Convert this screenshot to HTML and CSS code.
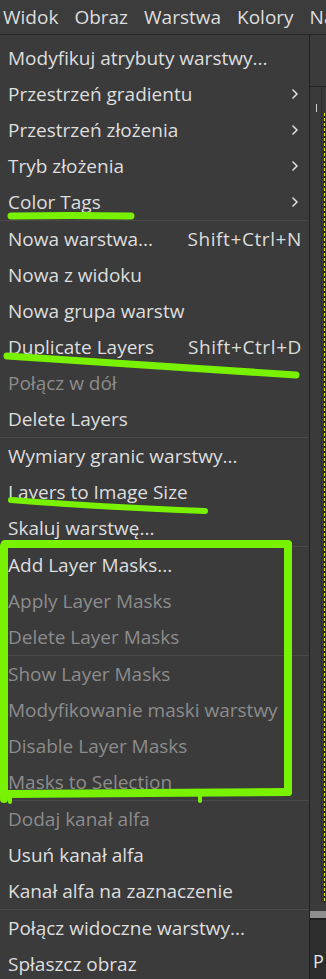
FILE: index.html
```html
<!DOCTYPE html>
<html lang="pl">
<head>
<meta charset="utf-8">
<title>Warstwa</title>
<link rel="stylesheet" href="styles.css">
</head>
<body>
<div class="app">
  <div class="menubar">
    <span class="mb">Widok</span>
    <span class="mb">Obraz</span>
    <span class="mb">Warstwa</span>
    <span class="mb">Kolory</span>
    <span class="mb">Na</span>
  </div>
  <div class="main">
    <div class="menu">
      <div class="item"><span>Modyfikuj atrybuty warstwy...</span></div>
      <div class="item"><span>Przestrzeń gradientu</span><svg class="chev" width="6" height="10" viewBox="0 0 6 10"><polyline points="1,1 5,5 1,9"/></svg></div>
      <div class="item"><span>Przestrzeń złożenia</span><svg class="chev" width="6" height="10" viewBox="0 0 6 10"><polyline points="1,1 5,5 1,9"/></svg></div>
      <div class="item"><span>Tryb złożenia</span><svg class="chev" width="6" height="10" viewBox="0 0 6 10"><polyline points="1,1 5,5 1,9"/></svg></div>
      <div class="item"><span>Color Tags</span><svg class="chev" width="6" height="10" viewBox="0 0 6 10"><polyline points="1,1 5,5 1,9"/></svg></div>
      <div class="sep"></div>
      <div class="item"><span>Nowa warstwa...</span><span class="key">Shift+Ctrl+N</span></div>
      <div class="item"><span>Nowa z widoku</span></div>
      <div class="item"><span>Nowa grupa warstw</span></div>
      <div class="item"><span>Duplicate Layers</span><span class="key">Shift+Ctrl+D</span></div>
      <div class="item dis"><span>Połącz w dół</span></div>
      <div class="item"><span>Delete Layers</span></div>
      <div class="sep"></div>
      <div class="item"><span>Wymiary granic warstwy...</span></div>
      <div class="item"><span>Layers to Image Size</span></div>
      <div class="item"><span>Skaluj warstwę...</span></div>
      <div class="sep"></div>
      <div class="item"><span>Add Layer Masks...</span></div>
      <div class="item dis"><span>Apply Layer Masks</span></div>
      <div class="item dis"><span>Delete Layer Masks</span></div>
      <div class="sep"></div>
      <div class="item dis"><span>Show Layer Masks</span></div>
      <div class="item dis"><span>Modyfikowanie maski warstwy</span></div>
      <div class="item dis"><span>Disable Layer Masks</span></div>
      <div class="item dis"><span>Masks to Selection</span></div>
      <div class="sep"></div>
      <div class="item dis"><span>Dodaj kanał alfa</span></div>
      <div class="item"><span>Usuń kanał alfa</span></div>
      <div class="item"><span>Kanał alfa na zaznaczenie</span></div>
      <div class="sep"></div>
      <div class="item"><span>Połącz widoczne warstwy...</span></div>
      <div class="item"><span>Spłaszcz obraz</span></div>
    </div>
    <div class="side">
      <div class="ruler-top"></div>
      <div class="canvas-area">
        <div class="vruler"><div class="tick"></div></div>
        <div class="canvas"><div class="dash"></div></div>
      </div>
      <div class="gap"></div>
      <div class="hbar"></div>
      <div class="hline"></div>
      <div class="bottom"><span class="p">P</span></div>
    </div>
  </div>
  <svg class="marks" width="326" height="979" viewBox="0 0 326 979">
    <path d="M11 216 Q70 215 131 216"/>
    <path d="M7 356 L296 375"/>
    <path d="M11 500 Q100 507 205 511"/>
    <path d="M4 546 L4 799"/>
    <path d="M5 544 L288 544"/>
    <path d="M288 545 L288 792"/>
    <path d="M6 794 L288 792"/>
    <path class="thin" d="M10 796 L10 802"/>
    <path class="thin" d="M200 796 L200 801"/>
  </svg>
</div>
</body>
</html>
```
FILE: styles.css
```css
html, body {
  margin: 0;
  padding: 0;
  background: #3b3b3b;
}
body {
  width: 326px;
  height: 979px;
  overflow: hidden;
  font-family: "Open Sans", "Noto Sans", sans-serif;
  color: #dedede;
}
.app {
  position: relative;
  width: 326px;
  height: 979px;
  overflow: hidden;
}
.menubar {
  display: flex;
  align-items: center;
  height: 34px;
  border-bottom: 1px solid #262626;
  padding-left: 3px;
  gap: 16px;
  white-space: nowrap;
  overflow: hidden;
  font-size: 19px;
  background: #3c3c3c;
}
.mb { flex: none; }
.main {
  display: flex;
  height: 944px;
}
.menu {
  width: 309px;
  flex: none;
  border-right: 1px solid #202020;
  padding-top: 5px;
  background: #3b3b3b;
  font-size: 19px;
}
.item {
  height: 36px;
  display: flex;
  align-items: center;
  justify-content: space-between;
  padding: 0 7px 0 8px;
  white-space: nowrap;
}
.item.dis { color: #8c8c8c; }
.key {
  color: #dedede;
  letter-spacing: 0.6px;
}
.chev {
  margin-right: 4px;
  fill: none;
  stroke: #dedede;
  stroke-width: 1.6;
  stroke-linecap: round;
  stroke-linejoin: round;
}
.sep {
  height: 1px;
  background: #4a4a4a;
}
.side {
  flex: 1;
  display: flex;
  flex-direction: column;
}
.ruler-top {
  height: 51px;
  background: #3b3b3b;
  border-bottom: 1px solid #232323;
}
.canvas-area {
  height: 816px;
  display: flex;
}
.vruler {
  width: 11px;
  background: #3a3a3a;
  border-right: 1px solid #2c2c2c;
  padding-top: 17px;
}
.tick {
  width: 1px;
  height: 8px;
  margin-left: 6px;
  background: #d0d0d0;
}
.canvas {
  flex: 1;
  background: #383838;
  padding-top: 26px;
  padding-left: 2px;
}
.dash {
  width: 1px;
  height: 790px;
  background: repeating-linear-gradient(to bottom, #e2e800 0 3px, #1a1a1a 3px 5px);
}
.gap {
  height: 8px;
  background: #3b3b3b;
}
.hbar {
  height: 7px;
  background: #8e8e8e;
}
.hline {
  height: 2px;
  background: #1e1e1e;
}
.bottom {
  flex: 1;
  background: #2d2d2d;
  padding: 31px 0 0 3px;
  font-size: 18px;
  line-height: 20px;
}
.p { color: #dfe6ee; }
.marks {
  position: absolute;
  left: 0;
  top: 0;
  pointer-events: none;
  fill: none;
  stroke: #78f200;
  stroke-width: 8;
  stroke-linecap: round;
  stroke-linejoin: round;
}
.marks path:nth-child(1) { stroke-width: 7; }
.marks path:nth-child(2) { stroke-width: 7; }
.marks path:nth-child(3) { stroke-width: 6; }
.marks .thin { stroke-width: 4; }
```
